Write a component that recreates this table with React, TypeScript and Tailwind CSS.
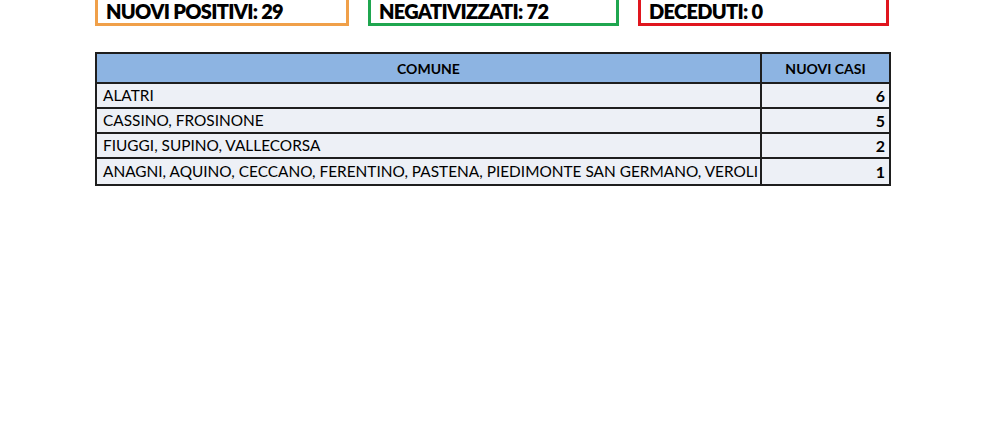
import React from "react";

const stats = [
  { label: "NUOVI POSITIVI: 29", border: "border-[#f0a049]", width: "w-[254px]" },
  { label: "NEGATIVIZZATI: 72", border: "border-[#1fa64f]", width: "w-[251px]" },
  { label: "DECEDUTI: 0", border: "border-[#e0161e]", width: "w-[251px]" },
];

const rows = [
  { comune: "ALATRI", casi: 6 },
  { comune: "CASSINO, FROSINONE", casi: 5 },
  { comune: "FIUGGI, SUPINO, VALLECORSA", casi: 2 },
  {
    comune:
      "ANAGNI, AQUINO, CECCANO, FERENTINO, PASTENA, PIEDIMONTE SAN GERMANO, VEROLI",
    casi: 1,
  },
];

const App = () => {
  return (
    <div
      className="w-[990px] h-[440px] bg-white overflow-hidden text-black"
      style={{ fontFamily: "Lato, 'Open Sans', 'Liberation Sans', sans-serif" }}
    >
      <div className="flex gap-[19px] pl-[95px] -mt-[14px]">
        {stats.map((s) => (
          <div
            key={s.label}
            className={`${s.width} h-[40px] border-[3px] ${s.border} flex items-end pl-[8px] pb-[2px]`}
          >
            <span className="text-[20px] font-extrabold leading-none whitespace-nowrap tracking-[-0.7px]">
              {s.label}
            </span>
          </div>
        ))}
      </div>

      <div className="ml-[95px] mt-[26px] w-[796px] border-2 border-[#1e1e1e]">
        <div className="flex h-[30px] bg-[#8db4e2] border-b-2 border-[#1e1e1e]">
          <div className="flex-1 flex items-center justify-center text-[14px] font-bold">
            COMUNE
          </div>
          <div className="w-[129px] border-l-2 border-[#1e1e1e] flex items-center justify-center text-[14px] font-bold">
            NUOVI CASI
          </div>
        </div>
        {rows.map((r, i) => (
          <div
            key={r.comune}
            className={`flex h-[25px] bg-[#edf0f6] ${i < rows.length - 1 ? "border-b-2 border-[#1e1e1e]" : ""}`}
          >
            <div className="flex-1 flex items-center pl-[6px] pt-[1px] text-[15.4px] whitespace-nowrap overflow-hidden">
              {r.comune}
            </div>
            <div className="w-[129px] border-l-2 border-[#1e1e1e] flex items-center justify-end pr-[4px] pt-[1px] text-[16px] font-bold">
              {r.casi}
            </div>
          </div>
        ))}
      </div>
    </div>
  );
};

export default App;
